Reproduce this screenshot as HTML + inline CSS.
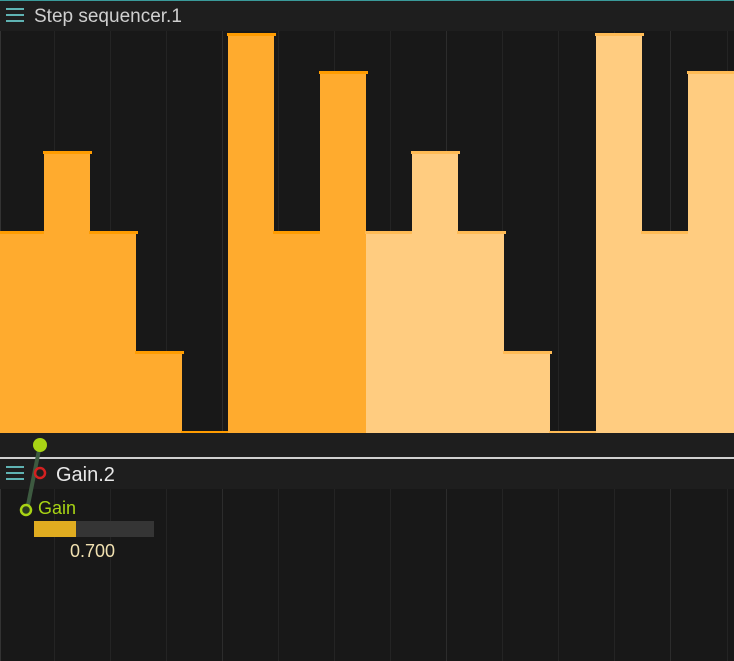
<!DOCTYPE html>
<html><head><style>
body{margin:0;width:734px;height:661px;background:#181818;position:relative;overflow:hidden;font-family:"Liberation Sans",sans-serif}
div{position:absolute}
.g{top:31px;width:1px;height:401px;background:#242424}
.g2{top:489px;width:1px;height:172px;background:#242424}
.b{bottom:0}
.d{background:#ffab2e}
.l{background:#ffcc80}
.d .t{background:#ff9c00}
.l .t{background:#ffbb55}
.t{position:absolute;left:-1px;right:-2px;top:-2px;height:3px}
.hm{width:18px;height:2px;background:#5fb3b3;left:6px}
</style></head><body>
<div style="left:0;top:0;width:734px;height:1px;background:#3a9a9a"></div>
<div style="left:0;top:1px;width:734px;height:30px;background:#1e1e1e"></div>
<div class="hm" style="top:8px"></div><div class="hm" style="top:14px"></div><div class="hm" style="top:20px"></div>
<div style="left:34px;top:6px;color:#cfcfcf;font-size:19px">Step sequencer.1</div>
<div class="g" style="left:0;background:#333"></div>
<div class="g" style="left:54px"></div><div class="g" style="left:110px"></div><div class="g" style="left:166px"></div><div class="g" style="left:222px;background:#2c2c2c"></div><div class="g" style="left:278px"></div><div class="g" style="left:334px"></div><div class="g" style="left:390px"></div><div class="g" style="left:446px;background:#2c2c2c"></div><div class="g" style="left:502px"></div><div class="g" style="left:558px"></div><div class="g" style="left:614px"></div><div class="g" style="left:670px;background:#2c2c2c"></div><div class="g" style="left:727px"></div>
<div style="left:0;top:31px;width:734px;height:402px">
<div class="b d" style="left:0;width:44px;height:200px"><div class="t" style="left:0"></div></div>
<div class="b d" style="left:44px;width:46px;height:280px"><div class="t"></div></div>
<div class="b d" style="left:90px;width:46px;height:200px"><div class="t"></div></div>
<div class="b d" style="left:136px;width:46px;height:80px"><div class="t"></div></div>
<div class="b d" style="left:182px;width:46px;height:0px"><div class="t"></div></div>
<div class="b d" style="left:228px;width:46px;height:398px"><div class="t"></div></div>
<div class="b d" style="left:274px;width:46px;height:200px"><div class="t"></div></div>
<div class="b d" style="left:320px;width:46px;height:360px"><div class="t"></div></div>
<div class="b l" style="left:366px;width:46px;height:200px"><div class="t"></div></div>
<div class="b l" style="left:412px;width:46px;height:280px"><div class="t"></div></div>
<div class="b l" style="left:458px;width:46px;height:200px"><div class="t"></div></div>
<div class="b l" style="left:504px;width:46px;height:80px"><div class="t"></div></div>
<div class="b l" style="left:550px;width:46px;height:0px"><div class="t"></div></div>
<div class="b l" style="left:596px;width:46px;height:398px"><div class="t"></div></div>
<div class="b l" style="left:642px;width:46px;height:200px"><div class="t"></div></div>
<div class="b l" style="left:688px;width:46px;height:360px"><div class="t"></div></div>
</div>
<div style="left:0;top:433px;width:734px;height:24px;background:#1e1e1e"></div>
<div style="left:0;top:457px;width:734px;height:2px;background:#d0d0d0"></div>
<div style="left:0;top:459px;width:734px;height:30px;background:#1e1e1e"></div>
<div class="hm" style="top:466px"></div><div class="hm" style="top:472px"></div><div class="hm" style="top:478px"></div>
<div style="left:56px;top:464px;color:#e8e8e8;font-size:20px">Gain.2</div>
<div class="g2" style="left:0;background:#333"></div>
<div class="g2" style="left:54px"></div><div class="g2" style="left:110px"></div><div class="g2" style="left:166px"></div><div class="g2" style="left:222px;background:#2c2c2c"></div><div class="g2" style="left:278px"></div><div class="g2" style="left:334px"></div><div class="g2" style="left:390px"></div><div class="g2" style="left:446px;background:#2c2c2c"></div><div class="g2" style="left:502px"></div><div class="g2" style="left:558px"></div><div class="g2" style="left:614px"></div><div class="g2" style="left:670px;background:#2c2c2c"></div><div class="g2" style="left:727px"></div>
<svg style="position:absolute;left:0;top:0" width="734" height="661">
<line x1="40" y1="445" x2="27" y2="510" stroke="#3d5a40" stroke-width="4"/>
<circle cx="40" cy="445" r="7" fill="#a8d414"/>
<circle cx="40" cy="473" r="5" fill="none" stroke="#d42020" stroke-width="2.5"/>
<circle cx="26" cy="510" r="5" fill="#2a3a20" stroke="#a8d414" stroke-width="2.5"/>
</svg>
<div style="left:38px;top:498px;color:#a8d414;font-size:18px">Gain</div>
<div style="left:34px;top:521px;width:120px;height:16px;background:#353535"></div>
<div style="left:34px;top:521px;width:42px;height:16px;background:#e0ac20"></div>
<div style="left:70px;top:541px;color:#f0e0b0;font-size:18px">0.700</div>
</body></html>
